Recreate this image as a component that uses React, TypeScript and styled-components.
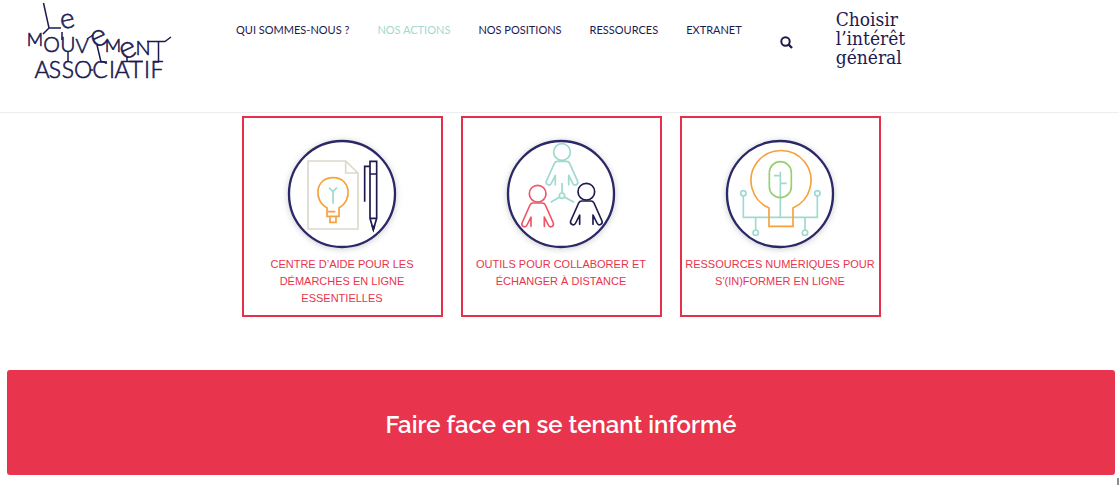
import React from "react";
import styled, { createGlobalStyle } from "styled-components";

const navy = "#1d1a4f";
const ring = "#2b2867";
const red = "#e8344c";
const mint = "#9fd9d0";
const orange = "#f7a13c";

const GlobalStyle = createGlobalStyle`
  *, *::before, *::after { box-sizing: border-box; }
  body { margin: 0; background: #fff; font-family: Lato, sans-serif; color: ${navy}; overflow-x: hidden; }
`;

const Header = styled.header`
  display: flex;
  align-items: flex-start;
  min-height: 113px;
  padding-left: 26px;
  border-bottom: 1px solid #ededf0;
`;

const LogoLink = styled.a`
  display: block;
  flex: none;
  color: ${navy};
  svg { display: block; overflow: visible; }
`;

const Nav = styled.nav`
  margin: 20px 0 0 62px;
`;

const NavList = styled.ul`
  display: flex;
  gap: 28px;
  margin: 0;
  padding: 0;
  list-style: none;
`;

const NavLink = styled.a<{ $active?: boolean }>`
  display: block;
  font-size: 11px;
  line-height: 20px;
  white-space: nowrap;
  text-decoration: none;
  color: ${(p) => (p.$active ? mint : navy)};
`;

const SearchButton = styled.button`
  display: flex;
  flex: none;
  margin: 36px 0 0 38px;
  padding: 0;
  border: 0;
  background: none;
  color: ${navy};
`;

const Slogan = styled.p`
  flex: none;
  margin: 10px 0 0 43px;
  font-family: "DejaVu Serif Condensed", "DejaVu Serif", serif;
  font-stretch: condensed;
  font-size: 19px;
  line-height: 19px;
`;

const Main = styled.main`
  padding: 3px 4px 10px 7px;
`;

const Cards = styled.section`
  display: flex;
  justify-content: center;
  gap: 18px;
`;

const Card = styled.a`
  display: flex;
  flex-direction: column;
  align-items: center;
  width: 201px;
  min-height: 201px;
  padding-top: 21px;
  border: 2px solid #e4304a;
  text-decoration: none;
  color: ${red};
  svg { display: block; overflow: visible; filter: drop-shadow(0 1px 3px rgba(0, 0, 0, 0.2)); }
`;

const CardLabel = styled.span`
  margin-top: 7px;
  font-family: "Liberation Sans", Arial, sans-serif;
  font-size: 11px;
  line-height: 17px;
  text-align: center;
  text-transform: uppercase;
`;

const Banner = styled.section`
  display: flex;
  align-items: center;
  justify-content: center;
  min-height: 105px;
  margin-top: 53px;
  padding: 4px 20px 0;
  border-radius: 3px;
  background: ${red};
`;

const BannerTitle = styled.h2`
  margin: 0;
  font-family: Raleway, Lato, sans-serif;
  font-size: 24px;
  font-weight: 600;
  line-height: 32px;
  color: #fff;
`;

const CornerMark = styled.div`
  position: fixed;
  right: 0;
  bottom: 0;
  width: 2px;
  height: 7px;
  background: #8c8c8c;
`;

function Logo() {
  return (
    <svg width="148" height="82" viewBox="26 0 148 82" role="img" aria-label="Le Mouvement Associatif">
      <g fill="none" stroke="currentColor" strokeWidth="1.5" strokeLinejoin="round">
        <path d="M43.5 3 49 28H61M49 28 43 34" />
        <path d="M62 32V40M68 52V62" />
        <path d="M87 39 93 35M97 45 101 62H107" />
        <path d="M123 61.500H143M127 57V62" />
        <path d="M147 41.500H165L171 37" />
        <path d="M158.500 42V62H153" />
        <path d="M90 70H93" />
      </g>
      <g fill="currentColor" stroke="currentColor" strokeWidth="0.6" fontFamily="Lato, sans-serif" fontWeight="300" textAnchor="middle">
        <text fontSize="28" transform="translate(69 28) rotate(-12)">e</text>
        <g fontSize="31">
          <text transform="translate(102 45) rotate(-25)">e</text>
          <text transform="translate(131 57) rotate(-25)">e</text>
        </g>
        <g fontSize="20">
          <text x="35" y="46" fontSize="18">M</text>
          <text x="51.500" y="52" fontSize="21">O</text>
          <text x="68" y="52" fontSize="21">U</text>
          <text x="82" y="53">V</text>
          <text x="113" y="52" fontSize="18">M</text>
          <text x="143" y="55">N</text>
        </g>
        <g fontSize="23">
          <text x="42" y="78">A</text>
          <text x="55" y="78">S</text>
          <text x="68" y="78">S</text>
          <text x="83" y="78">O</text>
          <text x="100" y="78">C</text>
          <text x="112" y="78">I</text>
          <text x="122" y="78">A</text>
          <text x="136" y="78">T</text>
          <text x="147" y="78">I</text>
          <text x="157" y="78">F</text>
        </g>
      </g>
    </svg>
  );
}

function RoundIcon({ children }: { children: React.ReactNode }) {
  return (
    <svg width="110" height="110" viewBox="0 0 330 330" fill="none" strokeWidth="5" aria-hidden="true">
      <circle cx="165" cy="165" r="159" fill="#fff" stroke={ring} strokeWidth="7" />
      {children}
    </svg>
  );
}

function HelpIcon() {
  return (
    <RoundIcon>
      <path d="M63 66H176L213 102V270H63ZM176 66V102H213" stroke="#ded8cb" />
      <g stroke={orange}>
        <path d="M120 232V206C80 188 82 116 138 116S196 188 156 206V232Z" />
        <path d="M120 218H145M129 232V250H147V232" />
      </g>
      <path d="M138 194V158L126 146M138 158 150 146" stroke={mint} />
      <g stroke={navy}>
        <path d="M249 67H269V238L259 272 249 238ZM249 105H269M249 238H269M249 82H233V188" />
        <path d="M256 262 259 272 262 262Z" fill={navy} />
      </g>
    </RoundIcon>
  );
}

function Person({ x, y, color }: { x: number; y: number; color: string }) {
  return (
    <g transform={`translate(${x} ${y})`} stroke={color} strokeLinejoin="round" strokeLinecap="round">
      <circle r="25" />
      <path d="M-20 98V70L-32 94C-37 104-50 98-47 88L-23 34Q-20 28-14 28H14Q20 28 23 34L47 88C50 98 37 104 32 94L20 70V98" />
    </g>
  );
}

function PeopleIcon() {
  return (
    <RoundIcon>
      <Person x={168} y={39} color={mint} />
      <Person x={95} y={164} color="#ef5468" />
      <Person x={241} y={158} color={navy} />
      <g stroke={mint}>
        <circle cx="168" cy="170" r="8" />
        <path d="M168 162V132M161 174 134 190M175 174 204 190" />
      </g>
    </RoundIcon>
  );
}

function DigitalIcon() {
  return (
    <RoundIcon>
      <g stroke={mint}>
        <path d="M166 98V235M166 110H147M166 133H185M55 171V235H277V171M92 235V273M240 235V273" />
        <circle cx="55" cy="163" r="8" />
        <circle cx="277" cy="163" r="8" />
        <circle cx="92" cy="281" r="8" />
        <circle cx="240" cy="281" r="8" />
      </g>
      <path d="M132 262V207A90 90 0 1 1 204 207V262Z" stroke={orange} />
      <rect x="133" y="68" width="66" height="108" rx="33" stroke="#98cf72" />
    </RoundIcon>
  );
}

const links = ["QUI SOMMES-NOUS ?", "NOS ACTIONS", "NOS POSITIONS", "RESSOURCES", "EXTRANET"];

export default function App() {
  return (
    <>
      <GlobalStyle />
      <Header>
        <LogoLink href="#"><Logo /></LogoLink>
        <Nav>
          <NavList>
            {links.map((label) => (
              <li key={label}>
                <NavLink href="#" $active={label === "NOS ACTIONS"}>{label}</NavLink>
              </li>
            ))}
          </NavList>
        </Nav>
        <SearchButton type="button" aria-label="Rechercher">
          <svg width="13" height="13" viewBox="0 0 13 13" fill="none" stroke="currentColor" strokeWidth="2">
            <circle cx="5.500" cy="5.500" r="4.200" />
            <path d="M8.500 8.500 12 12" strokeWidth="2.400" />
          </svg>
        </SearchButton>
        <Slogan>Choisir<br />l’intérêt<br />général</Slogan>
      </Header>
      <Main>
        <Cards>
          <Card href="#">
            <HelpIcon />
            <CardLabel>Centre d’aide pour les<br />démarches en ligne<br />essentielles</CardLabel>
          </Card>
          <Card href="#">
            <PeopleIcon />
            <CardLabel>Outils pour collaborer et<br />échanger à distance</CardLabel>
          </Card>
          <Card href="#">
            <DigitalIcon />
            <CardLabel>Ressources numériques pour<br />s'(in)former en ligne</CardLabel>
          </Card>
        </Cards>
        <Banner>
          <BannerTitle>Faire face en se tenant informé</BannerTitle>
        </Banner>
      </Main>
      <CornerMark />
    </>
  );
}
